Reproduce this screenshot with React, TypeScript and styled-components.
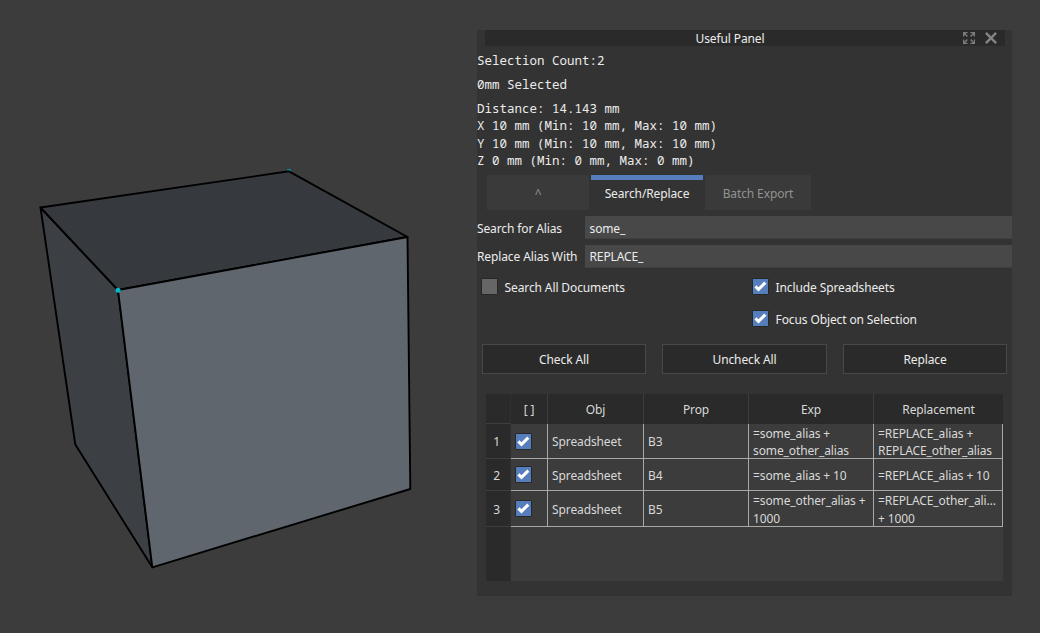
import React from "react";
import styled, { createGlobalStyle } from "styled-components";

const Global = createGlobalStyle`
  * { box-sizing: border-box; }
  html, body { margin: 0; padding: 0; background: #3c3c3c; }
  body { overflow: hidden; }
`;

const Window = styled.div`
  display: grid;
  grid-template-columns: 477px 535px 1fr;
  width: 1040px;
  height: 633px;
  background: #3c3c3c;
  color: #ececec;
  font: 12px/18px "Noto Sans", sans-serif;
  letter-spacing: -0.12px;
`;

const Viewport = styled.svg`
  display: block;
  width: 477px;
  height: 633px;
`;

const Panel = styled.section`
  display: flex;
  flex-direction: column;
  height: 566px;
  margin-top: 30px;
  background: #333333;
`;

const TitleBar = styled.header`
  display: grid;
  grid-template-columns: 1fr 12px 12px;
  column-gap: 10px;
  align-items: center;
  flex: none;
  height: 16px;
  margin: 0 7px 0 8px;
  padding-right: 8px;
  background: #2a2a2a;
`;

const Title = styled.h1`
  height: 16px;
  margin: 0;
  padding-left: 22px;
  font-size: 12px;
  font-weight: 400;
  line-height: 18px;
  text-align: center;
`;

const TitleIcon = styled.svg`
  display: block;
  width: 12px;
  height: 12px;
`;

const Readout = styled.div`
  display: flex;
  flex-direction: column;
  height: 129px;
  padding-top: 6px;
  font: 12.5px/17.4px "Noto Sans Mono", "DejaVu Sans Mono", monospace;
  letter-spacing: 0;
  white-space: pre;
`;

const ReadoutLine = styled.div<{ $gap?: number }>`
  height: 17.4px;
  margin-bottom: ${(p) => p.$gap ?? 0}px;
`;

const Tabs = styled.nav`
  display: grid;
  grid-template-columns: 102px 112px 106px;
  column-gap: 2px;
  flex: none;
  height: 35px;
  padding-left: 10px;
`;

const Tab = styled.div<{ $active?: boolean }>`
  display: flex;
  align-items: center;
  justify-content: center;
  padding-top: ${(p) => (p.$active ? 0 : 2)}px;
  border-top: ${(p) => (p.$active ? "5px solid #567dbc" : "0")};
  padding-bottom: ${(p) => (p.$active ? 3 : 0)}px;
  background: ${(p) => (p.$active ? "#333333" : "#3a3a3a")};
  color: ${(p) => (p.$active ? "#ececec" : "#929292")};
`;

const Fields = styled.div`
  display: grid;
  grid-template-columns: 108px 427px;
  grid-auto-rows: 23px;
  row-gap: 6px;
  flex: none;
  margin-top: 6px;
`;

const FieldLabel = styled.span<{ $top: number }>`
  padding-top: ${(p) => p.$top}px;
`;

const Input = styled.div<{ $top: number }>`
  height: 23px;
  padding: ${(p) => p.$top}px 4.5px 0;
  border-bottom: 1px solid #404040;
  background: #484848;
`;

const Options = styled.div`
  display: grid;
  grid-template-columns: 271px 1fr;
  grid-template-rows: 33px 31px;
  flex: none;
  align-items: center;
  margin: 2px 0 0 4px;
`;

const Option = styled.label<{ $col: number }>`
  display: flex;
  align-items: center;
  gap: 6.6px;
  grid-column: ${(p) => p.$col};
`;

const OptionText = styled.span`
  padding-top: 3px;
`;

const Box = styled.span<{ $on?: boolean }>`
  display: block;
  flex: none;
  width: 17px;
  height: 17px;
  border: 1px solid #272727;
  border-radius: 1px;
  background: ${(p) => (p.$on ? "#567dbc" : "#666666")};
  svg { display: block; }
`;

const Buttons = styled.div`
  display: grid;
  grid-template-columns: 164px 165px 164px;
  column-gap: 16px;
  flex: none;
  margin: 10px 0 0 5px;
`;

const Button = styled.button`
  height: 30px;
  padding: 2px 0 0;
  border: 1px solid #484848;
  background: #2a2a2a;
  color: #ececec;
  font: inherit;
  letter-spacing: inherit;
`;

const Table = styled.div`
  display: grid;
  grid-template-columns: 25px 37px 96px 105px 125px 129px;
  grid-template-rows: 30px 35px 32px 36px 1fr;
  flex: none;
  height: 187px;
  margin: 20px 9px 0;
  background: #3c3c3c;
  color: #d8d8d8;
`;

const HeadCell = styled.div<{ $last?: boolean }>`
  display: flex;
  align-items: center;
  justify-content: center;
  padding-top: 2px;
  border-right: ${(p) => (p.$last ? 0 : 1)}px solid #3e3e3e;
  background: #2a2a2a;
`;

const RowHead = styled.div<{ $rule?: boolean }>`
  display: flex;
  align-items: center;
  justify-content: center;
  padding: 2px 3px 0 0;
  border-right: 1px solid #303030;
  border-bottom: ${(p) => (p.$rule ? 1 : 0)}px solid #3e3e3e;
  background: #2a2a2a;
`;

const Cell = styled.div<{ $text?: boolean }>`
  display: flex;
  align-items: center;
  min-width: 0;
  padding: ${(p) => (p.$text ? "2px 0 0 4.1px" : "0 0 0 4px")};
  border-right: 1px solid #a8a8a8;
  border-bottom: 1px solid #a8a8a8;
  line-height: 17.4px;
  white-space: pre;
`;

const Check = ({ on = true }: { on?: boolean }) => (
  <Box $on={on}>
    {on && (
      <svg width="15" height="15" viewBox="0 0 15 15">
        <path d="M2.4 7.3 5.5 10.3 12.3 3.7" fill="none" stroke="#fff" strokeWidth="3" />
      </svg>
    )}
  </Box>
);

const rows = [
  { obj: "Spreadsheet", prop: "B3", exp: "=some_alias +\nsome_other_alias", rep: "=REPLACE_alias +\nREPLACE_other_alias" },
  { obj: "Spreadsheet", prop: "B4", exp: "=some_alias + 10", rep: "=REPLACE_alias + 10" },
  { obj: "Spreadsheet", prop: "B5", exp: "=some_other_alias +\n1000", rep: "=REPLACE_other_ali…\n+ 1000" },
];

export default function App() {
  return (
    <>
      <Global />
      <Window>
        <Viewport viewBox="0 0 477 633">
          <circle cx="289" cy="171" r="2.3" fill="#078f9a" />
          <g stroke="#000" strokeWidth="1.9" strokeLinejoin="round">
            <path d="M40.5 207.5 118 290 152.3 567.3 75.3 444.5Z" fill="#3c3f44" />
            <path d="M40.5 207.5 289 171.3 407.5 237 118 290Z" fill="#36393e" />
            <path d="M118 290 407.5 237 410.3 489 152.3 567.3Z" fill="#5f666e" />
          </g>
          <circle cx="118" cy="290.3" r="2.5" fill="#00b8c8" />
        </Viewport>
        <Panel>
          <TitleBar>
            <Title>Useful Panel</Title>
            <TitleIcon viewBox="0 0 12 12" fill="none" stroke="#7c7c7c" strokeWidth="1.4">
              <path d="M.6 4.6V.6H4.6M.8.8 4.4 4.4M7.4.6h4v4M11.2.8 7.6 4.4M.6 7.4v4h4M.8 11.2 4.4 7.6M7.4 11.4h4v-4M11.2 11.2 7.6 7.6" />
            </TitleIcon>
            <TitleIcon viewBox="0 0 12 12" fill="none" stroke="#858585" strokeWidth="2.4">
              <path d="M.9.9 11.1 11.1M11.1.9.9 11.1" />
            </TitleIcon>
          </TitleBar>
          <Readout>
            <ReadoutLine $gap={6.6}>Selection Count:2</ReadoutLine>
            <ReadoutLine $gap={6.6}>0mm Selected</ReadoutLine>
            <ReadoutLine>Distance: 14.143 mm</ReadoutLine>
            <ReadoutLine>X 10 mm (Min: 10 mm, Max: 10 mm)</ReadoutLine>
            <ReadoutLine>Y 10 mm (Min: 10 mm, Max: 10 mm)</ReadoutLine>
            <ReadoutLine>Z 0 mm (Min: 0 mm, Max: 0 mm)</ReadoutLine>
          </Readout>
          <Tabs>
            <Tab>^</Tab>
            <Tab $active>Search/Replace</Tab>
            <Tab>Batch Export</Tab>
          </Tabs>
          <Fields>
            <FieldLabel $top={4}>Search for Alias</FieldLabel>
            <Input $top={4}>some_</Input>
            <FieldLabel $top={3}>Replace Alias With</FieldLabel>
            <Input $top={3}>REPLACE_</Input>
          </Fields>
          <Options>
            <Option $col={1}><Check on={false} /><OptionText>Search All Documents</OptionText></Option>
            <Option $col={2}><Check /><OptionText>Include Spreadsheets</OptionText></Option>
            <Option $col={2}><Check /><OptionText>Focus Object on Selection</OptionText></Option>
          </Options>
          <Buttons>
            <Button>Check All</Button>
            <Button>Uncheck All</Button>
            <Button>Replace</Button>
          </Buttons>
          <Table>
            <RowHead $rule />
            <HeadCell>[ ]</HeadCell>
            <HeadCell>Obj</HeadCell>
            <HeadCell>Prop</HeadCell>
            <HeadCell>Exp</HeadCell>
            <HeadCell $last>Replacement</HeadCell>
            {rows.map((r, i) => (
              <React.Fragment key={i}>
                <RowHead $rule>{i + 1}</RowHead>
                <Cell><Check /></Cell>
                <Cell $text>{r.obj}</Cell>
                <Cell $text>{r.prop}</Cell>
                <Cell $text>{r.exp}</Cell>
                <Cell $text>{r.rep}</Cell>
              </React.Fragment>
            ))}
            <RowHead />
          </Table>
        </Panel>
      </Window>
    </>
  );
}
